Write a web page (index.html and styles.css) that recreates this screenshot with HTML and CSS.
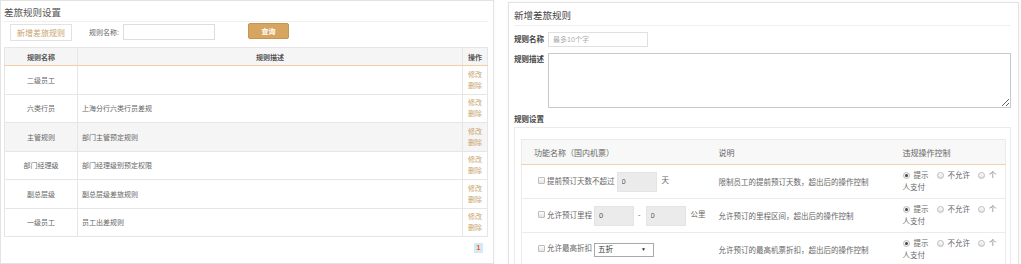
FILE: index.html
```html
<!DOCTYPE html>
<html lang="zh-CN">
<head>
    <meta charset="UTF-8">
    <title>差旅规则设置</title>
    <link rel="stylesheet" href="styles.css">
</head>
<body>
    <div class="page">
        <div class="panel list-panel">
            <div class="panel-title">差旅规则设置</div>
            <div class="toolbar">
                <button class="btn-add">新增差旅规则</button>
                <span class="search-label">规则名称:</span>
                <input type="text" class="search-input">
                <button class="btn-query">查询</button>
            </div>
            <table class="rule-table">
                <thead>
                    <tr>
                        <th class="col-name">规则名称</th>
                        <th>规则描述</th>
                        <th class="col-op">操作</th>
                    </tr>
                </thead>
                <tbody>
                    <tr>
                        <td class="col-name">二级员工</td>
                        <td class="col-desc"></td>
                        <td class="col-op"><a href="#">修改</a><a href="#">删除</a></td>
                    </tr>
                    <tr>
                        <td class="col-name">六类行员</td>
                        <td class="col-desc">上海分行六类行员差规</td>
                        <td class="col-op"><a href="#">修改</a><a href="#">删除</a></td>
                    </tr>
                    <tr class="active">
                        <td class="col-name">主管规则</td>
                        <td class="col-desc">部门主管预定规则</td>
                        <td class="col-op"><a href="#">修改</a><a href="#">删除</a></td>
                    </tr>
                    <tr>
                        <td class="col-name">部门经理级</td>
                        <td class="col-desc">部门经理级别预定权限</td>
                        <td class="col-op"><a href="#">修改</a><a href="#">删除</a></td>
                    </tr>
                    <tr>
                        <td class="col-name">副总层级</td>
                        <td class="col-desc">副总层级差旅规则</td>
                        <td class="col-op"><a href="#">修改</a><a href="#">删除</a></td>
                    </tr>
                    <tr>
                        <td class="col-name">一级员工</td>
                        <td class="col-desc">员工出差规则</td>
                        <td class="col-op"><a href="#">修改</a><a href="#">删除</a></td>
                    </tr>
                </tbody>
            </table>
            <div class="pager"><span class="page-num">1</span></div>
        </div>

        <div class="panel form-panel">
            <div class="panel-title">新增差旅规则</div>
            <div class="form-row">
                <label class="form-label">规则名称</label>
                <input type="text" class="name-input" placeholder="最多10个字">
            </div>
            <div class="form-row top">
                <label class="form-label">规则描述</label>
                <textarea class="desc-input"></textarea>
            </div>
            <div class="form-label setting-label">规则设置</div>
            <div class="setting-box">
                <table class="setting-table">
                    <thead>
                        <tr>
                            <th class="col-func">功能名称（国内机票）</th>
                            <th class="col-note">说明</th>
                            <th>违规操作控制</th>
                        </tr>
                    </thead>
                    <tbody>
                        <tr>
                            <td class="col-func"><span class="check"></span>提前预订天数不超过<input type="text" class="num-input" value="0"><span class="unit">天</span></td>
                            <td class="col-note">限制员工的提前预订天数，超出后的操作控制</td>
                            <td class="col-ctrl"><span class="radio checked"></span>提示<span class="radio"></span>不允许<span class="radio"></span>个<br>人支付</td>
                        </tr>
                        <tr>
                            <td class="col-func"><span class="check"></span>允许预订里程<input type="text" class="num-input" value="0"><span class="dash">-</span><input type="text" class="num-input" value="0"><span class="unit">公里</span></td>
                            <td class="col-note">允许预订的里程区间，超出后的操作控制</td>
                            <td class="col-ctrl"><span class="radio checked"></span>提示<span class="radio"></span>不允许<span class="radio"></span>个<br>人支付</td>
                        </tr>
                        <tr>
                            <td class="col-func"><span class="check"></span>允许最高折扣<span class="select-wrap"><select class="discount-select"><option>五折</option></select></span></td>
                            <td class="col-note">允许预订的最高机票折扣，超出后的操作控制</td>
                            <td class="col-ctrl"><span class="radio checked"></span>提示<span class="radio"></span>不允许<span class="radio"></span>个<br>人支付</td>
                        </tr>
                    </tbody>
                </table>
            </div>
        </div>
    </div>
</body>
</html>
```

FILE: styles.css
```css
* {
    box-sizing: border-box;
}

body {
    margin: 0;
    font-family: "Liberation Sans", "Noto Sans CJK SC", sans-serif;
    color: #555;
    background-color: #fff;
    overflow: hidden;
}

.page {
    display: flex;
    align-items: flex-start;
    gap: 14px;
}

.panel {
    background-color: #fff;
    border: 1px solid #e3e3e3;
    box-shadow: 0 0 2px rgba(0, 0, 0, 0.06);
}

.panel-title {
    border-bottom: 1px solid #f0f0f0;
    color: #555;
}

/* List panel */
.list-panel {
    width: 494px;
    height: 264px;
    padding: 0 5px 0 3px;
}

.list-panel .panel-title {
    height: 21px;
    padding-top: 3px;
    font-size: 9.5px;
    line-height: 17px;
}

.toolbar {
    display: flex;
    align-items: flex-start;
    padding: 2px 0 6px 6px;
}

.btn-add {
    width: 62px;
    height: 17px;
    padding: 0;
    border: 1px solid #e2e2e2;
    background-color: #fff;
    color: #c9a36c;
    font-family: inherit;
    font-size: 8px;
}

.search-label {
    margin-left: 17px;
    font-size: 7px;
    line-height: 17px;
    color: #666;
}

.search-input {
    width: 92px;
    height: 16px;
    margin-left: 4px;
    padding: 0 3px;
    border: 1px solid #ddd;
    font-size: 7px;
}

.btn-query {
    width: 41px;
    height: 16px;
    margin: -1px 0 0 33px;
    padding: 0;
    border: 1px solid #c69552;
    border-radius: 2px;
    background-color: #d6a660;
    color: #fff;
    font-family: inherit;
    font-size: 7px;
    font-weight: bold;
}

.rule-table {
    width: 100%;
    border-collapse: collapse;
    border: 1px solid #e6e6e6;
    font-size: 7px;
    color: #666;
}

.rule-table th {
    height: 18px;
    padding: 0;
    background-color: #f5f5f5;
    border-left: 1px solid #e6e6e6;
    border-bottom: 1px solid #f2cfa4;
    font-weight: bold;
    color: #555;
}

.rule-table td {
    height: 28.5px;
    padding: 0 4px;
    border-left: 1px solid #e6e6e6;
    border-bottom: 1px solid #e6e6e6;
}

.rule-table .col-name {
    width: 73px;
    text-align: center;
}

.rule-table .col-op {
    width: 25px;
    padding: 0;
    text-align: center;
}

.rule-table tr.active td {
    background-color: #f5f5f5;
}

.col-op a {
    display: block;
    line-height: 11px;
    color: #c9a36c;
    text-decoration: none;
}

.pager {
    display: flex;
    justify-content: flex-end;
    padding: 6px 5px 0 0;
}

.page-num {
    width: 9px;
    height: 10px;
    background-color: #d3ebf7;
    color: #f0560f;
    font-size: 7px;
    font-weight: bold;
    line-height: 10px;
    text-align: center;
}

/* Form panel */
.form-panel {
    width: 511px;
    height: 270px;
    margin-top: 2px;
    padding: 0 7px 0 5px;
}

.form-panel .panel-title {
    height: 23px;
    padding-top: 4px;
    font-size: 9.5px;
    line-height: 18px;
    color: #444;
}

.form-row {
    display: flex;
    align-items: center;
    margin-top: 6px;
}

.form-row.top {
    align-items: flex-start;
}

.form-label {
    width: 34px;
    flex-shrink: 0;
    font-size: 7.5px;
    font-weight: bold;
    line-height: 12px;
    color: #444;
}

.form-row.top .form-label {
    margin-top: 1px;
}

.name-input {
    width: 100px;
    height: 15px;
    padding: 0 4px;
    border: 1px solid #e0e0e0;
    font-size: 7px;
}

.name-input::placeholder {
    color: #aaa;
}

.desc-input {
    display: block;
    flex: 1;
    height: 55px;
    border: 1px solid #c9c9c9;
}

.setting-label {
    margin: 6px 0 1px;
}

.setting-box {
    border: 1px solid #ebebeb;
    padding: 11px 4px 0 6px;
}

.setting-table {
    width: 100%;
    border-collapse: collapse;
    border: 1px solid #ebebeb;
    font-size: 7.5px;
    color: #666;
}

.setting-table th {
    height: 25px;
    padding: 0 0 0 12px;
    background-color: #f8f8f8;
    border-bottom: 1px solid #f0d4b0;
    font-size: 8px;
    font-weight: normal;
    text-align: left;
    color: #666;
}

.setting-table td {
    height: 34px;
    padding: 0 0 0 12px;
    border-bottom: 1px solid #ebebeb;
    white-space: nowrap;
}

.setting-table .col-func {
    width: 185px;
}

.setting-table td.col-func {
    padding-left: 16px;
}

.setting-table .col-note {
    width: 184px;
}

.check {
    display: inline-block;
    width: 7px;
    height: 7px;
    margin-right: 2px;
    border: 1px solid #bdbdbd;
    border-radius: 1px;
    background: linear-gradient(#fdfdfd, #e4e4e4);
    vertical-align: -1px;
}

.num-input {
    width: 40px;
    height: 20px;
    margin-left: 2px;
    padding: 0 4px;
    border: 1px solid #e4e4e4;
    background-color: #ebebeb;
    font-family: inherit;
    font-size: 7.5px;
    color: #555;
    vertical-align: middle;
}

.unit {
    margin-left: 5px;
}

.dash {
    margin: 0 3px 0 4px;
}

.select-wrap {
    position: relative;
    display: inline-block;
    margin-left: 2px;
    vertical-align: middle;
}

.select-wrap::after {
    content: "▼";
    position: absolute;
    right: 8px;
    top: 3px;
    font-size: 5px;
    color: #333;
    pointer-events: none;
}

.discount-select {
    appearance: none;
    width: 60px;
    height: 14px;
    padding: 0 3px;
    border: 1px solid #a9a9a9;
    border-radius: 0;
    background-color: #fff;
    font-family: inherit;
    font-size: 7.5px;
    color: #333;
}

.setting-table td.col-ctrl {
    line-height: 12px;
}

.radio {
    display: inline-block;
    width: 7px;
    height: 7px;
    margin: 0 4px 0 8px;
    border: 1px solid #bdbdbd;
    border-radius: 50%;
    background: linear-gradient(#fdfdfd, #e2e2e2);
    vertical-align: -1px;
    position: relative;
}

.radio:first-child {
    margin-left: 0;
}

.radio.checked {
    background: #f2f2f2;
}

.radio.checked::after {
    content: "";
    position: absolute;
    left: 1px;
    top: 1px;
    width: 3px;
    height: 3px;
    border-radius: 50%;
    background-color: #444;
}
```
